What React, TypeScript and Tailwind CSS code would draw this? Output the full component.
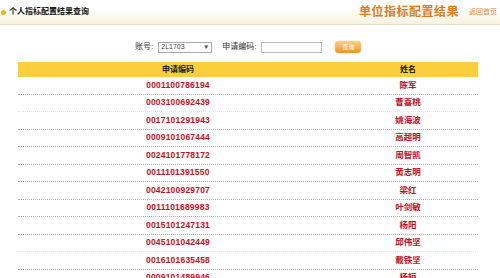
import React from 'react'

const rows = [
  ['0001100786194', '陈军'],
  ['0003100692439', '曹喜桃'],
  ['0017101291943', '姚海波'],
  ['0009101067444', '高超明'],
  ['0024101778172', '周智凯'],
  ['0011101391550', '黄志明'],
  ['0042100929707', '梁红'],
  ['0011101689983', '叶剑敏'],
  ['0015101247131', '杨阳'],
  ['0045101042449', '邱伟坚'],
  ['0016101635458', '戴铁坚'],
  ['0009101489946', '杨桓'],
]

const cjk = '"Liberation Sans", "Noto Sans CJK SC", sans-serif'

export default function App() {
  return (
    <div
      className="relative h-[278px] w-[500px] overflow-hidden bg-white"
      style={{ fontFamily: cjk }}
    >
      {/* top bar */}
      <div className="flex h-[25px] items-center justify-between border-b border-[#e4dcc4] bg-gradient-to-b from-white from-40% to-[#f8f2de] pl-[1px] pr-[3px]">
        <div className="flex items-center gap-[3px]">
          <span className="h-[5px] w-[5px] rounded-full bg-[#f0b020]" />
          <span className="text-[8px] font-bold text-[#111]">个人指标配置结果查询</span>
        </div>
        <div className="flex items-center gap-[10px]">
          <span className="text-[12px] font-bold tracking-[0.5px] text-[#e07a1a]">单位指标配置结果</span>
          <span className="text-[7px] text-[#e08a40]">返回首页</span>
        </div>
      </div>

      {/* filter */}
      <div className="mt-[13px] flex h-[18px] items-center pl-[135px] text-[8px] text-[#333]">
        <span>账号:</span>
        <div className="ml-[5px] flex h-[11px] w-[54px] items-center justify-between border border-[#a8a8a8] px-[2px] text-[7px] text-[#444]">
          <span>2L1703</span>
          <span className="text-[6px]">▼</span>
        </div>
        <span className="ml-[10px]">申请编码:</span>
        <div className="ml-[5px] h-[11px] w-[61px] border border-[#b8b8b8] bg-white" />
        <div className="ml-[13px] flex h-[12px] w-[26px] items-center justify-center rounded-[4px] bg-gradient-to-b from-[#fbd27a] to-[#e8961e] text-[6px] text-white shadow-[0_0_1px_#c07010]">
          查询
        </div>
      </div>

      {/* table */}
      <div className="ml-[18px] mt-[6px] w-[460px]">
        <div className="grid h-[15px] grid-cols-[320px_140px] items-center bg-[#fbcf3c] text-[8px] font-bold text-[#222]">
          <div className="text-center">申请编码</div>
          <div className="text-center">姓名</div>
        </div>
        {rows.map(([code, name], i) => (
          <div
            key={i}
            className={`grid h-[17.5px] grid-cols-[320px_140px] items-center border-b border-dotted text-[8.5px] font-bold text-[#c4101c] ${
              i === 1 || i === 9 ? 'border-[#dbe8f2]' : 'border-[#b0b0b0]'
            }`}
          >
            <div className="text-center tracking-[0.2px]">{code}</div>
            <div className="text-center">{name}</div>
          </div>
        ))}
      </div>
    </div>
  )
}
